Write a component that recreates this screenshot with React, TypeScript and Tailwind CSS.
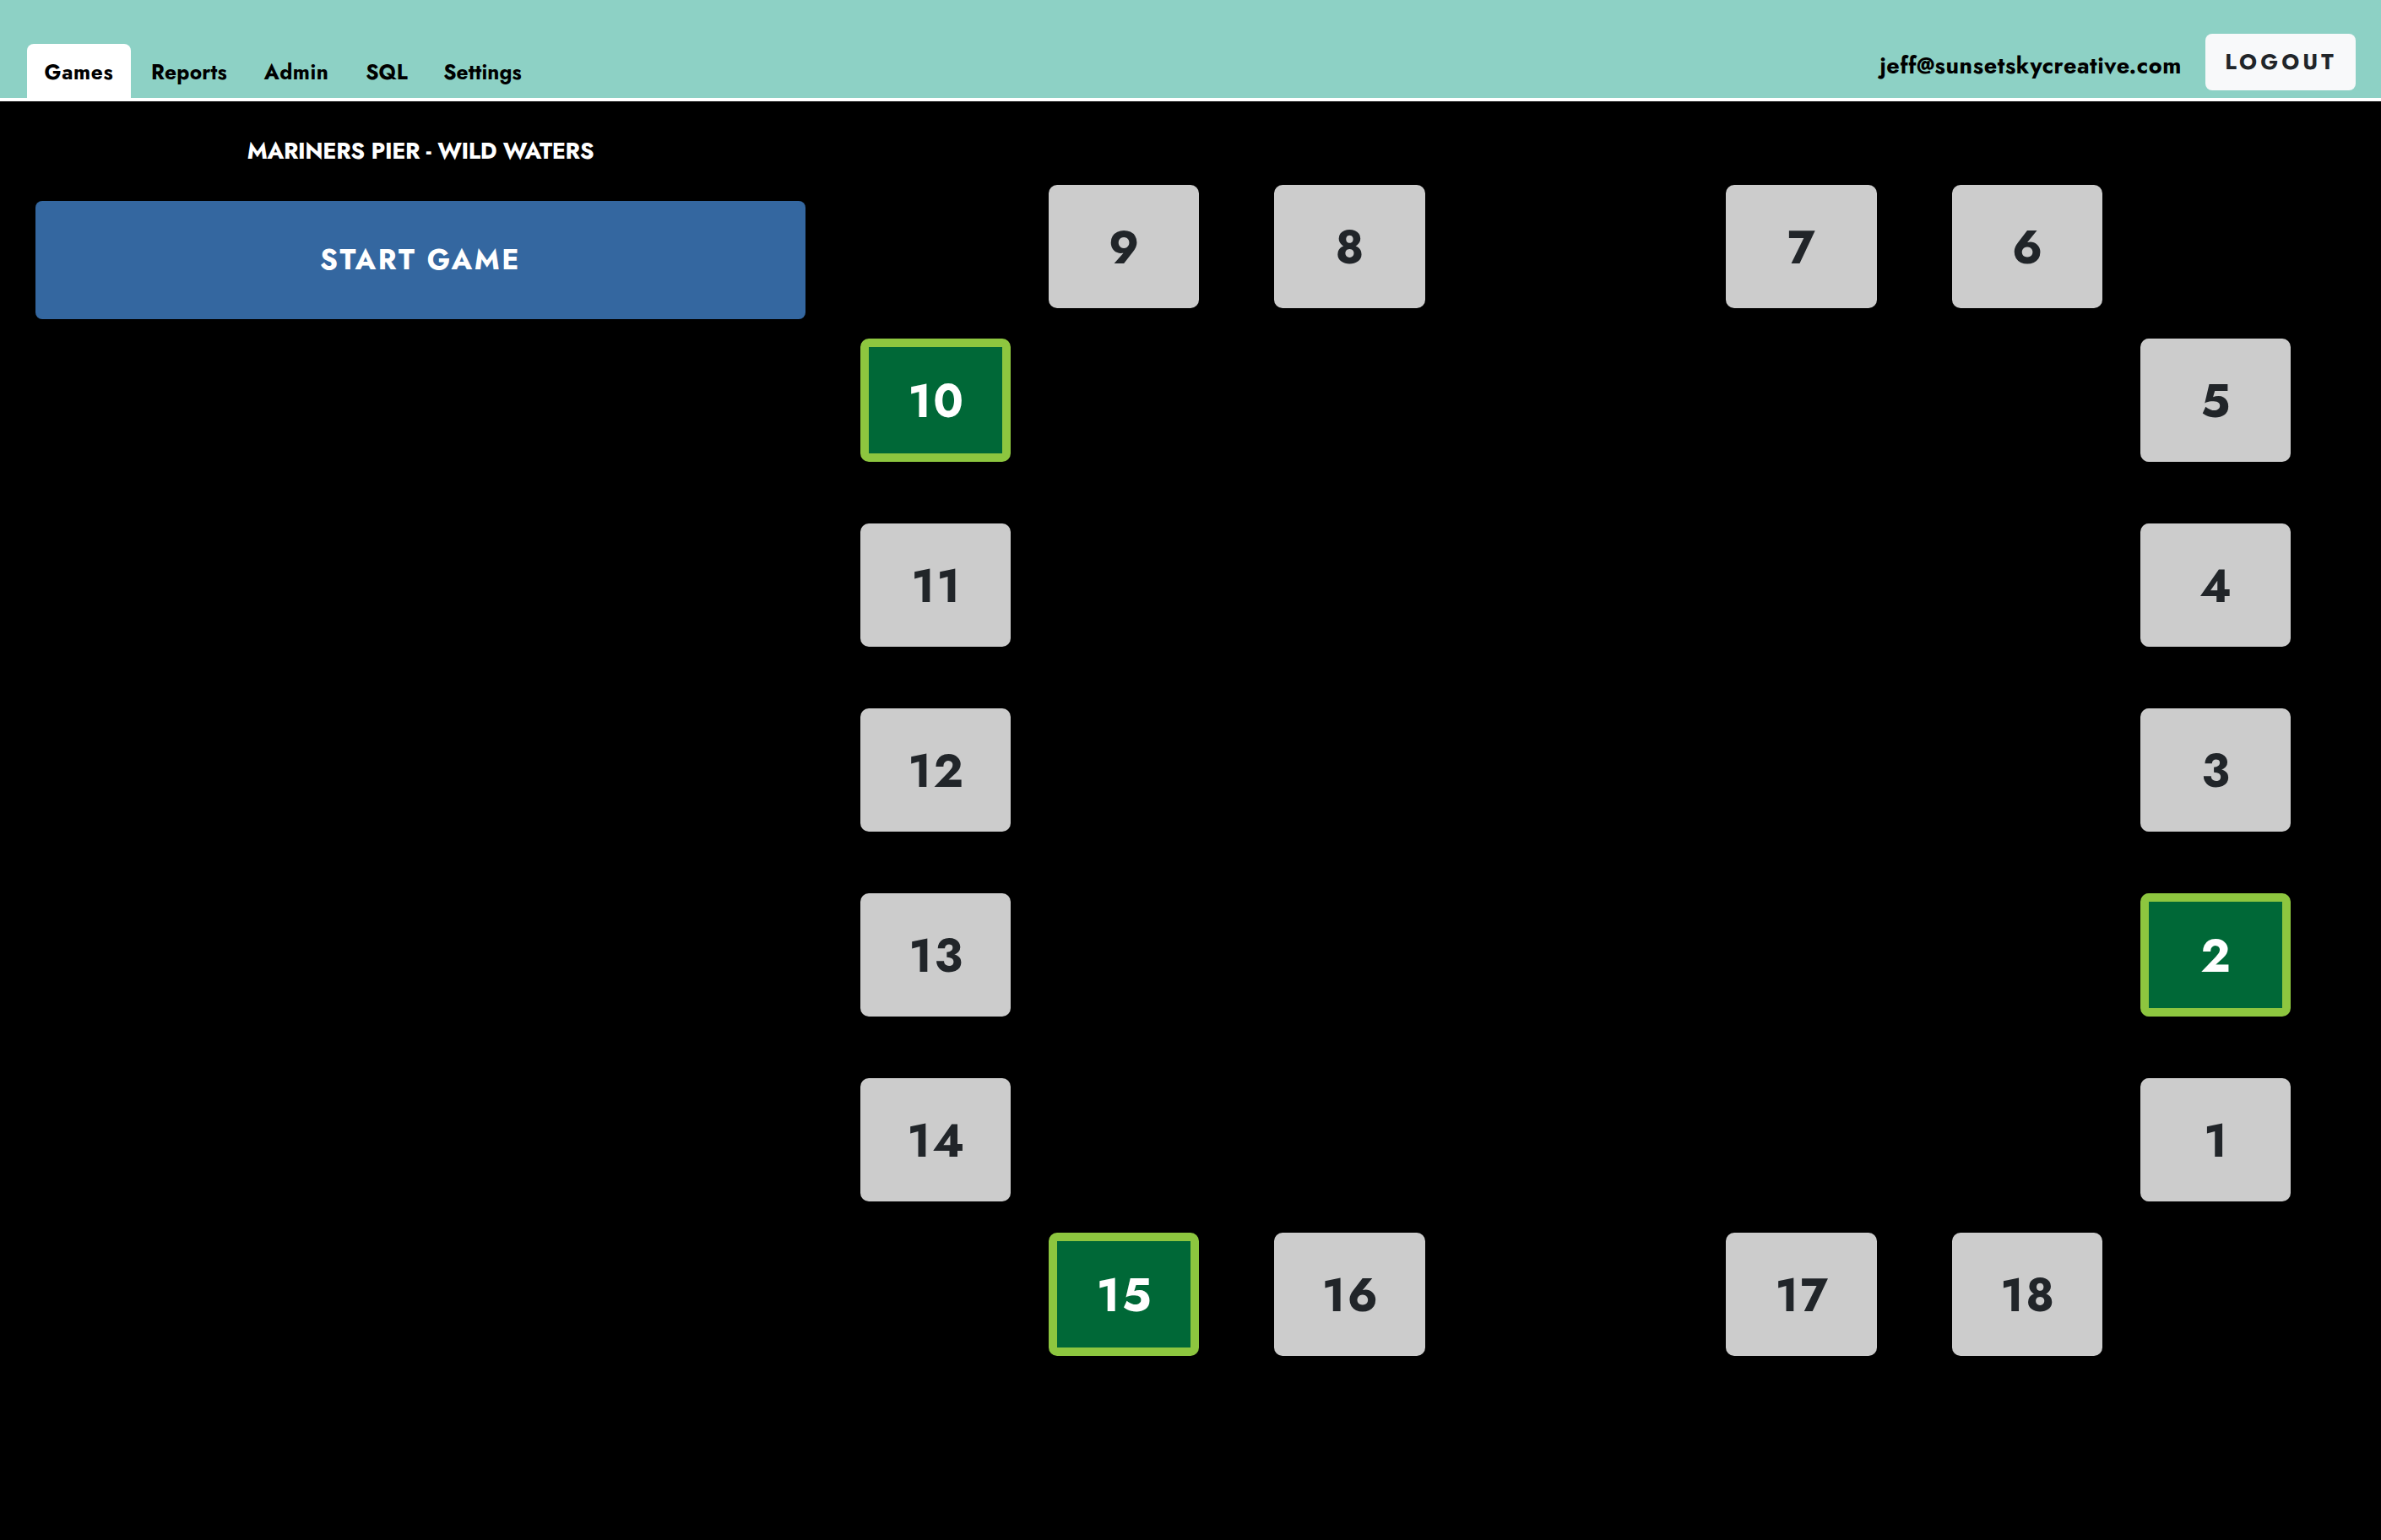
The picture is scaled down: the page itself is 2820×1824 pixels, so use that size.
import clsx from 'clsx';

interface NavItem {
  label: string;
  className: string;
}

interface SeatProps {
  number: number;
  className?: string;
}

const NAV_ITEMS: NavItem[] = [
  { label: 'Games', className: 'w-[123px] tracking-[0.7px]' },
  { label: 'Reports', className: 'w-[130px] tracking-[0.2px]' },
  { label: 'Admin', className: 'w-[116px] tracking-[0.5px]' },
  { label: 'SQL', className: 'w-[90px]' },
  { label: 'Settings', className: 'w-[129px] tracking-[0.1px]' },
];

const ACTIVE_TAB = 'Games';
const ACTIVE_SEATS = [2, 10, 15];

// null leaves an empty slot in the row
const TOP_ROW = [9, 8, null, 7, 6];
const BOTTOM_ROW = [15, 16, null, 17, 18];
const LEFT_COLUMN = [10, 11, 12, 13, 14];
const RIGHT_COLUMN = [5, 4, 3, 2, 1];

function Seat({ number, className }: SeatProps) {
  const active = ACTIVE_SEATS.includes(number);

  return (
    <button
      className={clsx(
        'flex h-[146px] items-center justify-center rounded-[10px] pt-px text-[54px] leading-none font-bold',
        active ? 'border-10 border-[#8dc63f] bg-[#006837] text-white' : 'bg-[#ccc] text-[#212529]',
        number > 9 && 'pl-[3px] tracking-[2.5px]',
        className
      )}
    >
      {number}
    </button>
  );
}

function SeatRow({ seats }: { seats: (number | null)[] }) {
  return (
    <div className="mx-[178.3px] grid grid-cols-5 justify-items-center">
      {seats.map((seat, i) => (seat ? <Seat key={seat} number={seat} className="w-2/3" /> : <div key={i} />))}
    </div>
  );
}

function SeatColumn({ seats }: { seats: number[] }) {
  return (
    <div className="flex w-[178px] flex-col gap-[73px]">
      {seats.map((seat) => (
        <Seat key={seat} number={seat} />
      ))}
    </div>
  );
}

export default function App() {
  return (
    <div className="min-h-screen bg-black font-['Jost','Lato',sans-serif]">
      {/* Header */}
      <header className="flex h-[120px] items-end justify-between border-b-4 border-white bg-[#8dd1c5] pr-[30px] pl-8 font-bold text-black">
        <nav className="flex gap-1">
          {NAV_ITEMS.map((item) => (
            <a
              key={item.label}
              className={clsx(
                'flex h-16 items-center justify-center rounded-t-lg pt-[5px] text-[24.5px] leading-none',
                item.label === ACTIVE_TAB && 'bg-white',
                item.className
              )}
            >
              {item.label}
            </a>
          ))}
        </nav>
        <div className="mb-[9px] flex h-[67px] items-center gap-7">
          <span className="pt-2 text-[27px] leading-none tracking-[0.6px]">jeff@sunsetskycreative.com</span>
          <button className="flex h-full w-[178px] items-center justify-center rounded-lg bg-[#f8f9fa] pl-px text-[25.6px] leading-none tracking-[4.1px] text-[#212529]">
            LOGOUT
          </button>
        </div>
      </header>

      <main className="flex">
        {/* Game controls */}
        <section className="ml-[42px] w-[912px] pt-[45px] text-center font-bold text-white">
          <h1 className="text-[27px] leading-[28px] tracking-[-0.39px]">MARINERS PIER - WILD WATERS</h1>
          <button className="mt-[45px] h-[140px] w-full rounded-lg bg-[#3467a0] text-[33.6px] leading-none tracking-[2.5px]">
            START GAME
          </button>
        </section>

        {/* Seats around the table */}
        <section className="ml-[65px] w-[1694px] pt-[99px]">
          <SeatRow seats={TOP_ROW} />
          <div className="mt-9 mb-[37px] flex justify-between">
            <SeatColumn seats={LEFT_COLUMN} />
            <SeatColumn seats={RIGHT_COLUMN} />
          </div>
          <SeatRow seats={BOTTOM_ROW} />
        </section>
      </main>
    </div>
  );
}
